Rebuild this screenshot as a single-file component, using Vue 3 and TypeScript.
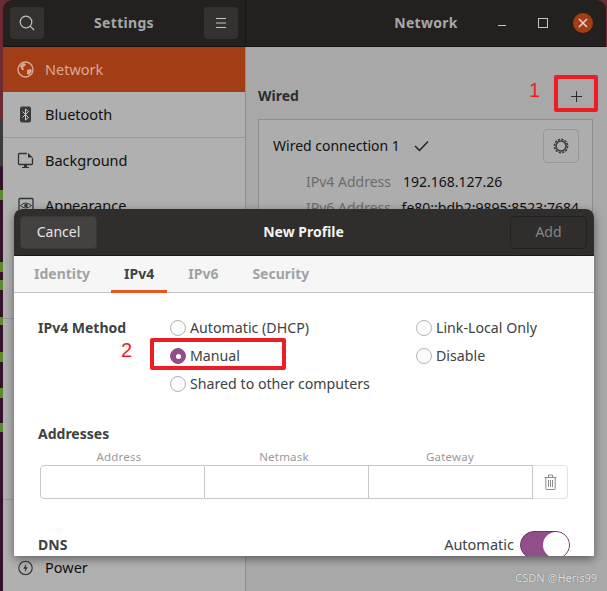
<script setup lang="ts">
interface Item { name: string; sep?: boolean; active?: boolean }
const upper: Item[] = [
  { name: 'Network', active: true },
  { name: 'Bluetooth', sep: true },
  { name: 'Background' },
  { name: 'Appearance' },
]
const tabs = ['Identity', 'IPv4', 'IPv6', 'Security']
const columns = ['Address', 'Netmask', 'Gateway']
</script>

<template>
  <div class="stage">
    <div class="window">
      <header class="titlebar">
        <div class="title-left">
          <button class="hbtn">
            <svg width="16" height="16" viewBox="0 0 16 16" fill="none" stroke="#c4c4c4" stroke-width="1.2"><circle cx="7" cy="7" r="5.8"/><path d="M11.2 11.2 15 15"/></svg>
          </button>
          <span class="wtitle">Settings</span>
          <button class="hbtn">
            <svg width="12" height="12" viewBox="0 0 12 12" stroke="#c4c4c4" stroke-width="1"><path d="M1 1.5h10M1 6h10M1 10.5h10"/></svg>
          </button>
        </div>
        <div class="title-right">
          <span class="wtitle">Network</span>
          <div class="controls">
            <span class="min"></span>
            <span class="max"></span>
            <span class="close">
              <svg width="10" height="10" viewBox="0 0 10 10" stroke="#e8d8d0" stroke-width="1.5"><path d="M1 1l8 8M9 1l-8 8"/></svg>
            </span>
          </div>
        </div>
      </header>
      <div class="body">
        <aside class="sidebar">
          <div v-for="(it, i) in upper" :key="it.name" class="row" :class="{ active: it.active, sep: it.sep }">
            <svg v-if="i === 0" class="ico" width="17" height="17" viewBox="0 0 17 17"><circle cx="8.5" cy="8.5" r="7.5" fill="none" stroke="#d9a994" stroke-width="1.4"/><path d="M3 5l3-3 3 1-1 2-2 1 1 3-2 0zM10 9l4-1 1 2-3 4-2-1z" fill="#d9a994"/></svg>
            <svg v-else-if="i === 1" class="ico" width="17" height="17" viewBox="0 0 17 17"><rect x="3" y="0.5" width="11" height="16" rx="2" fill="#3a3a3a"/><path d="M5.5 5.5l6 6-3 2.5v-11l3 2.5-6 6" fill="none" stroke="#c8c8c8" stroke-width="1"/></svg>
            <svg v-else-if="i === 2" class="ico" width="17" height="17" viewBox="0 0 17 17"><path d="M10 1.5H2.5a1 1 0 0 0-1 1v9a1 1 0 0 0 1 1h12a1 1 0 0 0 1-1V6" fill="none" stroke="#2e3436" stroke-width="1.3"/><path d="M11 1l5 4.5h-5z" fill="#2e3436"/><path d="M7 13h3v2H7zM5 15h7v1H5z" fill="#2e3436"/></svg>
            <svg v-else class="ico" width="17" height="17" viewBox="0 0 17 17"><rect x="2" y="1.5" width="14" height="14" rx="1" fill="none" stroke="#2e3436" stroke-width="1.3"/><path d="M3.5 8.500q5-5 11 0q-6 5-11 0z" fill="none" stroke="#2e3436"/><circle cx="9" cy="8.500" r="1.800" fill="#2e3436"/></svg>
            <span class="rname">{{ it.name }}</span>
          </div>
          <div class="group g1"></div>
          <div class="group g2"></div>
          <div class="group g3"></div>
          <div class="row">
            <svg class="ico" width="16" height="16" viewBox="0 0 16 16"><circle cx="8" cy="8" r="6.700" fill="none" stroke="#2e3436" stroke-width="1.100"/><path d="M8.800 3.500 5.800 8.800h2l-.6 3.700 3-5.300h-2z" fill="#2e3436"/></svg>
            <span class="rname">Power</span>
          </div>
        </aside>
        <main class="content">
          <div class="wired-head">
            <span class="wired">Wired</span>
            <span class="plus">
              <svg width="11" height="11" viewBox="0 0 11 11" stroke="#2b2b2b" stroke-width="1"><path d="M5.500 0v11M0 5.500h11"/></svg>
            </span>
          </div>
          <section class="card">
            <div class="conn">
              <span class="ctext">Wired connection 1</span>
              <svg class="check" width="15" height="12" viewBox="0 0 15 12" fill="none" stroke="#222" stroke-width="1.500"><path d="M1 6l4.500 4.500L14 1.500"/></svg>
              <span class="grow"></span>
              <span class="gear">
                <svg width="18" height="18" viewBox="0 0 18 18" fill="none" stroke="#3a3a3a"><circle cx="9" cy="9" r="5" stroke-width="1.500"/><circle cx="9" cy="9" r="6.600" stroke-width="1.600" stroke-dasharray="2.200 1.260"/></svg>
              </span>
            </div>
            <div class="kv"><span class="k">IPv4 Address</span><span class="v">192.168.127.26</span></div>
            <div class="kv"><span class="k">IPv6 Address</span><span class="v">fe80::bdb2:9895:8523:7684</span></div>
          </section>
        </main>
      </div>
    </div>

    <div class="dialog">
      <div class="dhead">
        <button class="cancel">Cancel</button>
        <span class="dtitle">New Profile</span>
        <button class="add">Add</button>
      </div>
      <nav class="tabs">
        <span v-for="t in tabs" :key="t" class="tab" :class="{ on: t === 'IPv4' }">{{ t }}</span>
      </nav>
      <div class="dbody">
        <div class="method">
          <span class="mlabel">IPv4 Method</span>
          <div class="radios">
            <label class="radio"><i class="dot"></i>Automatic (DHCP)</label>
            <label class="radio"><i class="dot"></i>Link-Local Only</label>
            <label class="radio"><i class="dot sel"></i>Manual</label>
            <label class="radio"><i class="dot"></i>Disable</label>
            <label class="radio wide"><i class="dot"></i>Shared to other computers</label>
          </div>
        </div>
        <h3 class="addr">Addresses</h3>
        <div class="cols">
          <span v-for="c in columns" :key="c">{{ c }}</span>
        </div>
        <div class="inputs">
          <div class="cell"></div>
          <div class="cell"></div>
          <div class="cell"></div>
          <div class="trash">
            <svg width="13" height="16" viewBox="0 0 13 16" fill="none" stroke="#8a8a8a"><path d="M.5 3.500h12M4.500 3V1h4v2M1.800 4v10.500a1 1 0 0 0 1 1h7.400a1 1 0 0 0 1-1V4M4.500 6v7M6.500 6v7M8.500 6v7"/></svg>
          </div>
        </div>
        <div class="dns">
          <span class="dnsl">DNS</span>
          <span class="grow"></span>
          <span class="auto">Automatic</span>
          <span class="switch"><span class="knob"></span></span>
        </div>
      </div>
    </div>

    <span class="mark one">1</span>
    <span class="redbox b1"></span>
    <span class="mark two">2</span>
    <span class="redbox b2"></span>
    <span class="wm">CSDN @Heris99</span>
  </div>
</template>

<style>
html, body { margin: 0; background: #a8a8a8; }
</style>

<style scoped>
.stage {
  position: relative;
  width: 607px;
  height: 591px;
  overflow: hidden;
  font-family: "Noto Sans", "Open Sans", sans-serif;
  color: #2e3436;
  background: linear-gradient(180deg,
    #6d2a32 0, #6d2a32 118px, #3c3b3b 120px, #3c3b3b 165px, #35102c 168px,
    #35102c 190px, #5d8a2a 190px, #5d8a2a 200px, #35102c 200px,
    #35102c 262px, #5d8a2a 262px, #5d8a2a 272px, #35102c 272px,
    #35102c 280px, #5d8a2a 280px, #5d8a2a 290px, #35102c 290px,
    #35102c 317px, #5d8a2a 317px, #5d8a2a 325px, #35102c 325px,
    #35102c 352px, #5d8a2a 352px, #5d8a2a 362px, #35102c 362px,
    #35102c 388px, #5d8a2a 388px, #5d8a2a 398px, #35102c 398px,
    #35102c 423px, #5d8a2a 423px, #5d8a2a 432px, #35102c 432px,
    #35102c 100%);
}
.window {
  margin-left: 3px;
  width: 604px;
  height: 591px;
  border-radius: 9px 9px 0 0;
  overflow: hidden;
  display: flex;
  flex-direction: column;
}
.titlebar { height: 46px; flex: none; display: flex; background: #242020; border-bottom: 1px solid #151313; margin-right: 1px; border-radius: 9px 9px 0 0; }
.title-left {
  width: 243px;
  padding: 0 7px;
  box-sizing: border-box;
  display: flex;
  align-items: center;
  justify-content: space-between;
  border-right: 1px solid #161414;
}
.hbtn {
  width: 34px;
  height: 32px;
  padding: 0;
  border: 0;
  border-radius: 4px;
  background: #343131;
  display: flex;
  align-items: center;
  justify-content: center;
}
.wtitle { font-size: 14px; font-weight: 700; color: #a5a8a8; letter-spacing: .3px; margin-top: -2px; }
.title-right { flex: 1; position: relative; display: flex; align-items: center; justify-content: center; }
.controls { position: absolute; right: 13px; top: 13px; display: flex; align-items: center; }
.min { width: 8px; height: 1px; background: #c6c6c6; margin-top: 5px; margin-right: 32px; }
.max { width: 8px; height: 8px; border: 1px solid #c6c6c6; margin-right: 25px; }
.close { width: 20px; height: 20px; border-radius: 50%; background: #a33d16; display: flex; align-items: center; justify-content: center; }
.body { flex: 1; display: flex; min-height: 0; background: #a8a8a8; }
.sidebar { width: 243px; background: #b0b0b0; border-right: 1px solid #8f8f8f; display: flex; flex-direction: column; box-sizing: border-box; }
.row { height: 45px; flex: none; display: flex; align-items: center; padding-left: 14px; font-size: 14.500px; color: #111; }
.row.sep { height: 46px; border-bottom: 1px solid #999; box-sizing: border-box; }
.row.active { background: #a33d16; color: #d9a994; }
.row .ico { width: 17px; margin-right: 11px; flex: none; }
.rname { line-height: 1; }
.group { flex: none; box-sizing: border-box; }
.g1 { height: 91px; border-bottom: 1px solid #999; }
.g2 { height: 181px; border-bottom: 1px solid #999; }
.g3 { height: 45px; }
.content { flex: 1; padding: 0 12px; box-sizing: border-box; }
.wired-head { height: 63px; padding-top: 35px; box-sizing: border-box; display: flex; align-items: center; justify-content: space-between; }
.wired { font-size: 14px; font-weight: 700; color: #2a2e30; margin-top: -1px; }
.plus { display: flex; margin-right: 13px; margin-top: 1px; }
.card { border: 1px solid #8e8e8e; background: #adadad; width: 335px; height: 200px; box-sizing: border-box; margin-top: 9px; padding: 0 13px 0 14px; font-size: 14px; color: #111; }
.conn { height: 52px; display: flex; align-items: center; margin-bottom: -4px; }
.ctext { margin-top: -2px; }
.check { margin-left: 14px; margin-top: -1px; }
.grow { flex: 1; }
.gear { width: 34px; height: 32px; border: 1px solid #979797; border-radius: 4px; display: flex; align-items: center; justify-content: center; }
.kv { display: flex; height: 26px; align-items: center; padding-left: 33px; }
.k { width: 97px; color: #6c6c6c; }
.v { color: #111; }
.dialog {
  position: absolute;
  left: 14px;
  top: 209px;
  width: 580px;
  height: 347px;
  border-radius: 8px 8px 0 0;
  overflow: hidden;
  background: #fff;
  display: flex;
  flex-direction: column;
}
.stage::after {
  content: "";
  position: absolute;
  left: 14px;
  top: 209px;
  width: 580px;
  height: 347px;
  border-radius: 8px 8px 0 0;
  box-shadow: 0 3px 10px rgba(0, 0, 0, .45);
  pointer-events: none;
  clip-path: inset(-20px -20px -20px -20px);
}
.dhead { height: 46px; flex: none; background: #302d2d; border-bottom: 1px solid #191717; display: flex; align-items: center; justify-content: space-between; padding: 0 7px 0 6px; }
.cancel, .add { width: 77px; height: 33px; padding: 0 0 2px; border-radius: 4px; font: inherit; font-size: 14px; }
.cancel { background: #434240; color: #e6e6e6; border: 1px solid #3a3937; }
.add { background: #302d2d; border: 1px solid #232121; color: #868686; }
.dtitle { font-size: 14px; font-weight: 700; color: #f2f2f2; margin-top: -2px; }
.tabs { height: 37px; flex: none; background: #f6f6f6; border-bottom: 1px solid #c6c6c6; display: flex; padding-left: 7px; box-sizing: border-box; }
.tab { height: 37px; box-sizing: border-box; padding: 0 13px; margin-right: 8px; line-height: 35px; font-size: 14px; font-weight: 700; color: #a0a3a3; }
.tab.on { color: #3d4243; border-bottom: 3px solid #e95420; }
.dbody { flex: 1; padding: 0 24px; min-height: 0; }
.method { display: flex; padding-top: 21px; }
.mlabel { width: 132px; font-size: 14px; font-weight: 700; color: #3d4243; line-height: 27px; }
.radios { display: grid; grid-template-columns: 246px auto; grid-auto-rows: 28px; }
.radio { display: flex; align-items: center; font-size: 14.200px; color: #3d4243; white-space: nowrap; padding-bottom: 2px; box-sizing: border-box; }
.wide { grid-column: 1 / 3; }
.dot { width: 14px; height: 14px; border: 1px solid #b4b4b4; border-radius: 50%; background: #fbfbfb; margin: 2px 4px 0 0; flex: none; display: block; }
.dot.sel { background: #924d8b; border-color: #924d8b; position: relative; }
.dot.sel::after { content: ""; position: absolute; left: 4.500px; top: 4.500px; width: 5px; height: 5px; border-radius: 50%; background: #fff; }
.addr { margin: 26px 0 0; font-size: 14px; line-height: 20px; font-weight: 700; color: #3d4243; }
.cols { display: grid; grid-template-columns: 162px 168px 164px; margin-top: 5px; height: 16px; font-size: 11.500px; line-height: 16px; letter-spacing: .2px; color: #9a9a9a; text-align: center; }
.inputs { display: flex; height: 34px; margin-left: 2px; }
.cell { width: 164px; flex: none; border: 1px solid #c8c8c8; border-left: 0; box-sizing: border-box; }
.cell:first-child { width: 165px; border-left: 1px solid #c8c8c8; border-radius: 4px 0 0 4px; }
.trash { width: 35px; flex: none; box-sizing: border-box; border: 1px solid #e2e2e2; border-left: 0; border-radius: 0 4px 4px 0; display: flex; align-items: center; justify-content: center; }
.dns { display: flex; align-items: center; margin-top: 32px; height: 28px; width: 532px; }
.dnsl { font-size: 14px; font-weight: 700; color: #3d4243; margin-top: -2px; }
.auto { font-size: 14.500px; color: #3d4243; margin: -2px 6px 0 0; }
.switch { width: 50px; height: 28px; border-radius: 14px; background: #924d8b; border: 1px solid #6d3868; box-sizing: border-box; position: relative; }
.knob { position: absolute; right: 0; top: 0; width: 26px; height: 26px; border-radius: 50%; background: #fff; }
.mark { position: absolute; color: #ee1c25; font-size: 20px; line-height: 1; font-family: "Liberation Sans", sans-serif; }
.one { left: 529px; top: 80px; }
.two { left: 121px; top: 340px; }
.redbox { position: absolute; border: 4px solid #ee1c25; box-sizing: border-box; border-radius: 2px; }
.b1 { left: 554px; top: 75px; width: 44px; height: 37px; }
.b2 { left: 150px; top: 338px; width: 136px; height: 32px; }
.wm { position: absolute; right: 10px; bottom: 6px; font-size: 11px; line-height: 14px; color: #e4e4e4; text-shadow: 0 0 1px #555; }
</style>
